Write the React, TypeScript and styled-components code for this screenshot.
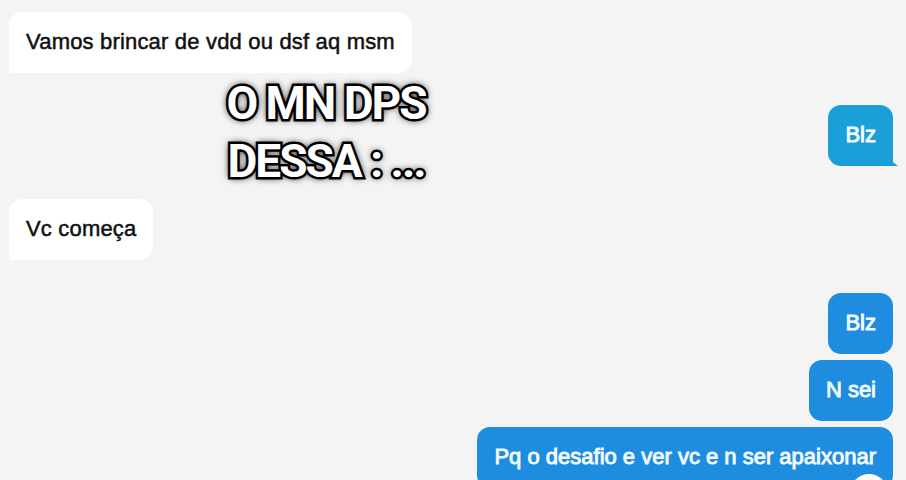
import styled, { createGlobalStyle } from "styled-components";

const GlobalStyle = createGlobalStyle`
  html, body {
    margin: 0;
    padding: 0;
    background: #f4f4f4;
  }
  body {
    width: 906px;
    height: 480px;
    overflow: hidden;
  }
`;

interface IMessage {
  text: string;
  mine: boolean;
  top: number;
  tone?: "cyan" | "blue";
  tail?: boolean;
}

const messages: IMessage[] = [
  { text: "Vamos brincar de vdd ou dsf aq msm", mine: false, top: 12 },
  { text: "Blz", mine: true, top: 32, tone: "cyan", tail: true },
  { text: "Vc começa", mine: false, top: 33 },
  { text: "Blz", mine: true, top: 33, tone: "blue" },
  { text: "N sei", mine: true, top: 6, tone: "blue" },
  { text: "Pq o desafio e ver vc e n ser apaixonar", mine: true, top: 6, tone: "blue" },
];

const App = () => {
  return (
    <>
      <GlobalStyle />
      <Screen>
        <Chat>
          {messages.map((m, i) => (
            <Row key={i} $mine={m.mine} $top={m.top}>
              <Bubble $mine={m.mine} $tone={m.tone} $tail={m.tail}>
                {m.text}
              </Bubble>
            </Row>
          ))}
        </Chat>
        <Caption>
          O MN DPS
          <br />
          DESSA : ...
        </Caption>
        <Reaction />
      </Screen>
    </>
  );
};

export default App;

const Screen = styled.div`
  position: relative;
  width: 906px;
  height: 480px;
  overflow: hidden;
  background-color: #f4f4f4;
`;

const Chat = styled.div`
  display: flex;
  flex-direction: column;
  padding: 0 13px 0 9px;
`;

const Row = styled.div<{ $mine: boolean; $top: number }>`
  display: flex;
  justify-content: ${(p) => (p.$mine ? "flex-end" : "flex-start")};
  margin-top: ${(p) => p.$top}px;
`;

const Bubble = styled.div<{ $mine: boolean; $tone?: string; $tail?: boolean }>`
  position: relative;
  box-sizing: border-box;
  height: 61px;
  display: flex;
  align-items: center;
  padding: 0 17px 1px;
  border-radius: ${(p) => (p.$mine ? "13px" : "14px 14px 14px 4px")};
  background-color: ${(p) =>
    !p.$mine ? "#ffffff" : p.$tone === "cyan" ? "#1b9fd8" : "#1e8de0"};
  color: ${(p) => (p.$mine ? "#f4fbff" : "#111111")};
  font-family: "Liberation Sans", Arial, sans-serif;
  font-weight: 400;
  font-size: 22px;
  letter-spacing: ${(p) => (p.$mine ? "0" : "0.18px")};
  -webkit-text-stroke: ${(p) => (p.$mine ? "0.9px #f4fbff" : "0.5px #111111")};
  white-space: nowrap;

  ${(p) =>
    p.$tail &&
    `
    border-bottom-right-radius: 4px;
    &::after {
      content: "";
      position: absolute;
      right: -5px;
      bottom: 0;
      width: 10px;
      height: 8px;
      background: #1b9fd8;
      clip-path: polygon(0 0, 100% 100%, 0 100%);
    }
  `}
`;

const Caption = styled.div`
  position: absolute;
  left: 196px;
  top: 74px;
  width: 260px;
  text-align: center;
  font-family: Roboto, "Liberation Sans", sans-serif;
  font-weight: 700;
  font-size: 46px;
  line-height: 58px;
  letter-spacing: -2px;
  color: #ffffff;
  -webkit-text-stroke: 5px #000000;
  paint-order: stroke fill;
  text-shadow: 0 0 6px rgba(0, 0, 0, 0.9), 0 0 10px rgba(0, 0, 0, 0.6);
`;

const Reaction = styled.div`
  position: absolute;
  left: 850px;
  top: 474px;
  width: 38px;
  height: 38px;
  border-radius: 50%;
  background: #ffffff;
`;
